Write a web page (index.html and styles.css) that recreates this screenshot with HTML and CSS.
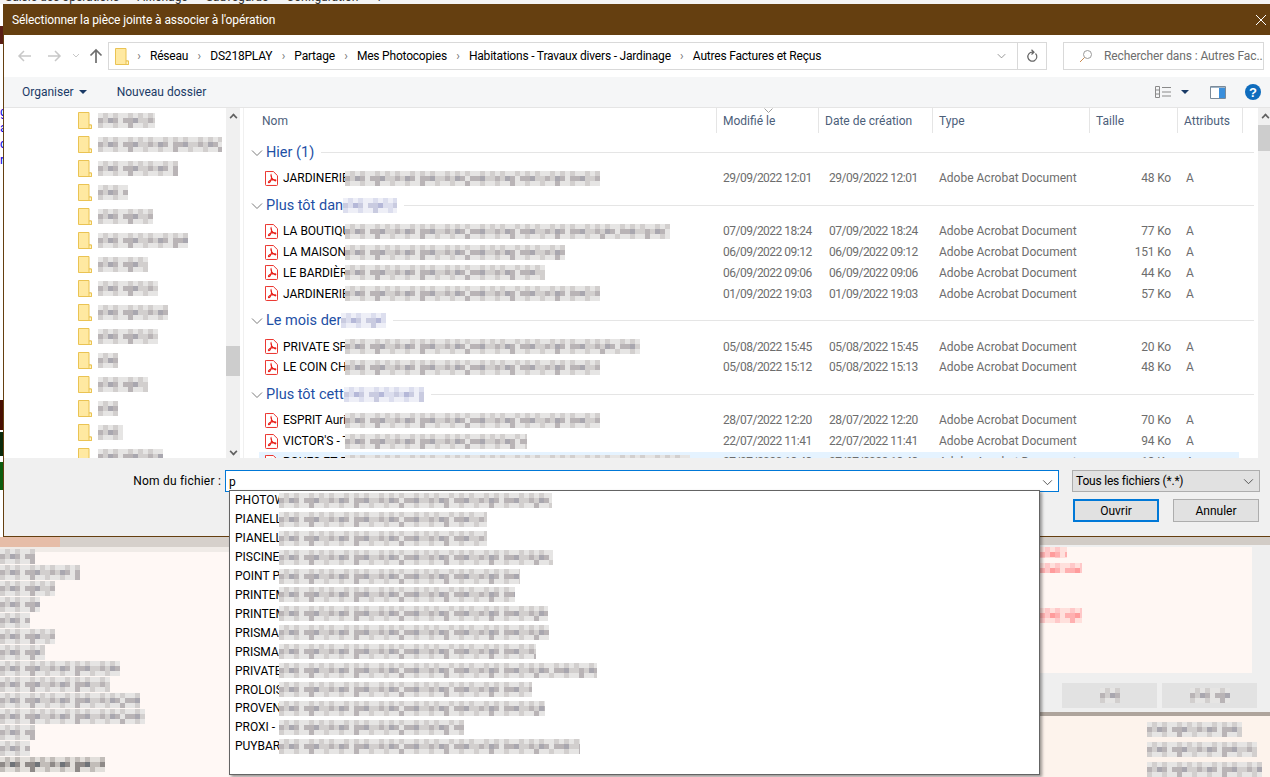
FILE: index.html
```html
<!DOCTYPE html>
<html lang="fr">
<head>
    <meta charset="UTF-8">
    <meta name="viewport" content="width=device-width, initial-scale=1.0">
    <title>Sélectionner la pièce jointe</title>
    <link rel="stylesheet" href="styles.css">
</head>
<body>
    <svg class="defs" width="0" height="0">
        <symbol id="folder" viewBox="0 0 14 17">
            <path d="M.5 .5h10.500v12.500h2.500v3.500h-13z" fill="#ffe9a1" stroke="#eac353"/>
            <path d="M11 13v3.500h2.500v-3.500z" fill="#fff3c4" stroke="#eac353"/>
        </symbol>
        <symbol id="pdf" viewBox="0 0 14 16">
            <path d="M1.500 .5h7.500l4.500 4.500v9.500a1 1 0 0 1-1 1h-11a1 1 0 0 1-1-1v-13.500a1 1 0 0 1 1-1z" fill="#fff" stroke="#e8201a"/>
            <path d="M6.500 4c-.8 1.500 1.500 5 3.800 6.300 1.400.7 2-.6.700-.9-2.300-.4-6.200.4-7.200 2-.7 1.300.8 1.500 1.700.2 1.200-1.700 2-5.200 1-7.600z" fill="none" stroke="#e8201a" stroke-width="1.100"/>
        </symbol>
        <symbol id="chev" viewBox="0 0 12 8">
            <path d="M1 1.500l5 5 5-5" fill="none" stroke="currentColor"/>
        </symbol>
    </svg>

    <div class="backdrop">
        <div class="back-menu">
            <span>Saisie des opérations</span><span>Affichage</span><span>Sauvegarde</span><span>Configuration</span><span>?</span>
        </div>
        <div class="back-edge">
            <div class="edge-title"></div>
            <div class="edge-links">g<br>a<br>c<br>r</div>
            <div class="edge-dark"></div>
            <div class="edge-black"></div>
            <div class="edge-green"></div>
        </div>
        <div class="back-lower">
            <div class="back-left">
                <div class="band"></div>
                <span class="mos" style="width:35px"></span>
                <span class="mos" style="width:80px"></span>
                <span class="mos" style="width:55px"></span>
                <span class="mos" style="width:40px"></span>
                <span class="mos" style="width:30px"></span>
                <span class="mos" style="width:55px"></span>
                <span class="mos" style="width:45px"></span>
                <span class="mos" style="width:120px"></span>
                <span class="mos" style="width:110px"></span>
                <span class="mos" style="width:140px"></span>
                <span class="mos" style="width:145px"></span>
                <span class="mos" style="width:35px"></span>
                <span class="mos" style="width:30px"></span>
                <span class="mos mos-dark" style="width:105px"></span>
            </div>
            <div class="back-right">
                <div class="back-panel">
                    <div class="back-note">
                        <span class="mos mos-red red-top" style="width:27px"></span>
                        <span class="mos mos-red red-mid" style="width:42px"></span>
                        <span class="mos mos-red red-low" style="width:42px"></span>
                    </div>
                    <div class="back-btns">
                        <div class="back-btn"><span class="mos" style="width:20px"></span></div>
                        <div class="back-btn"><span class="mos" style="width:40px"></span></div>
                    </div>
                </div>
                <div class="back-rows">
                    <span class="mos" style="width:95px"></span>
                    <span class="mos" style="width:110px"></span>
                    <span class="mos" style="width:115px"></span>
                </div>
            </div>
        </div>
    </div>

    <div class="dialog">
        <div class="titlebar">
            <span>Sélectionner la pièce jointe à associer à l'opération</span>
            <svg class="close" width="12" height="12" viewBox="0 0 12 12"><path d="M1 1l10 10M11 1l-10 10" stroke="#fff"/></svg>
        </div>

        <div class="navbar">
            <svg class="nav-ico" width="16" height="14" viewBox="0 0 16 14"><path d="M14 7h-12M7 2l-5 5 5 5" fill="none" stroke="#c8c8c8" stroke-width="1.500"/></svg>
            <svg class="nav-ico" width="16" height="14" viewBox="0 0 16 14"><path d="M2 7h12M9 2l5 5-5 5" fill="none" stroke="#c8c8c8" stroke-width="1.500"/></svg>
            <svg class="nav-drop" width="8" height="6" viewBox="0 0 8 6"><path d="M1 1l3 3 3-3" fill="none" stroke="#c8c8c8"/></svg>
            <svg class="nav-ico" width="14" height="16" viewBox="0 0 14 16"><path d="M7 15v-13M1.500 7.500l5.500-5.500 5.500 5.500" fill="none" stroke="#6e6e6e" stroke-width="1.700"/></svg>
            <div class="address">
                <svg class="addr-folder"><use href="#folder"/></svg>
                <span class="sep">›</span><span>Réseau</span>
                <span class="sep">›</span><span>DS218PLAY</span>
                <span class="sep">›</span><span>Partage</span>
                <span class="sep">›</span><span>Mes Photocopies</span>
                <span class="sep">›</span><span>Habitations - Travaux divers - Jardinage</span>
                <span class="sep">›</span><span>Autres Factures et Reçus</span>
                <div class="addr-end">
                    <svg class="addr-chev"><use href="#chev"/></svg>
                    <div class="addr-refresh">
                        <svg width="12" height="14" viewBox="0 0 12 14"><path d="M9.500 4.500a4.500 4.500 0 1 1-3-1.300h1.500M5.500 .8l2.500 2.400-2.500 2.300" fill="none" stroke="#666" stroke-width="1.200"/></svg>
                    </div>
                </div>
            </div>
            <div class="search">
                <svg width="14" height="14" viewBox="0 0 14 14"><circle cx="8.500" cy="5.500" r="4" fill="none" stroke="#9a9a9a"/><path d="M5.500 8.500l-4.500 4.500" stroke="#c98a50"/></svg>
                <span>Rechercher dans : Autres Fac...</span>
            </div>
        </div>

        <div class="toolbar">
            <span class="tool-org">Organiser <i class="caret"></i></span>
            <span class="tool-new">Nouveau dossier</span>
            <div class="tool-right">
                <svg width="17" height="14" viewBox="0 0 17 14"><path d="M.5 1.500h4v11h-4zM.5 5h4M.5 9h4M7 2.500h9M7 7h9M7 11h9" fill="none" stroke="#8a8a8a"/></svg>
                <i class="caret"></i>
                <svg class="tool-pane" width="16" height="13" viewBox="0 0 16 13"><path d="M.5 .5h15v12h-15z" fill="#fff" stroke="#7a8a99"/><path d="M9 1h6v11h-6z" fill="#3a8fdc"/><path d="M1 1h14v1h-14z" fill="#9fb4c7"/></svg>
                <svg width="16" height="16" viewBox="0 0 16 16"><circle cx="8" cy="8" r="8" fill="#0f6cbd"/><text x="8" y="12.500" text-anchor="middle" class="help-mark">?</text></svg>
            </div>
        </div>

        <div class="browser">
            <div class="tree">
                <div class="tree-list">
                    <div class="tree-item"><svg><use href="#folder"/></svg><span class="mos" style="width:57px"></span></div>
                    <div class="tree-item"><svg><use href="#folder"/></svg><span class="mos" style="width:124px"></span></div>
                    <div class="tree-item"><svg><use href="#folder"/></svg><span class="mos" style="width:80px"></span></div>
                    <div class="tree-item"><svg><use href="#folder"/></svg><span class="mos" style="width:30px"></span></div>
                    <div class="tree-item"><svg><use href="#folder"/></svg><span class="mos" style="width:55px"></span></div>
                    <div class="tree-item"><svg><use href="#folder"/></svg><span class="mos" style="width:90px"></span></div>
                    <div class="tree-item"><svg><use href="#folder"/></svg><span class="mos" style="width:50px"></span></div>
                    <div class="tree-item"><svg><use href="#folder"/></svg><span class="mos" style="width:60px"></span></div>
                    <div class="tree-item"><svg><use href="#folder"/></svg><span class="mos" style="width:70px"></span></div>
                    <div class="tree-item"><svg><use href="#folder"/></svg><span class="mos" style="width:60px"></span></div>
                    <div class="tree-item"><svg><use href="#folder"/></svg><span class="mos" style="width:20px"></span></div>
                    <div class="tree-item"><svg><use href="#folder"/></svg><span class="mos" style="width:50px"></span></div>
                    <div class="tree-item"><svg><use href="#folder"/></svg><span class="mos" style="width:20px"></span></div>
                    <div class="tree-item"><svg><use href="#folder"/></svg><span class="mos" style="width:25px"></span></div>
                    <div class="tree-item"><svg><use href="#folder"/></svg><span class="mos" style="width:65px"></span></div>
                </div>
                <div class="scroll tree-scroll">
                    <span class="arr arr-up"></span>
                    <div class="thumb"></div>
                    <span class="arr arr-down"></span>
                </div>
            </div>

            <div class="files">
                <div class="head">
                    <div class="col col-name">Nom</div>
                    <div class="col col-mod"><svg class="sort" width="9" height="5" viewBox="0 0 9 5"><path d="M.5 .5l4 4 4-4" fill="none" stroke="#a0a0a0"/></svg>Modifié le</div>
                    <div class="col col-date">Date de création</div>
                    <div class="col col-type">Type</div>
                    <div class="col col-size">Taille</div>
                    <div class="col col-attr">Attributs</div>
                </div>

                <div class="list">
                    <div class="group first"><svg class="g-chev"><use href="#chev"/></svg><span>Hier (1)</span><i></i></div>
                    <div class="row"><svg><use href="#pdf"/></svg><div class="fname">JARDINERIE<span class="mos" style="width:255px"></span></div><span>29/09/2022 12:01</span><span>29/09/2022 12:01</span><span>Adobe Acrobat Document</span><span class="size">48 Ko</span><span>A</span></div>

                    <div class="group"><svg class="g-chev"><use href="#chev"/></svg><span>Plus tôt dan</span><span class="mos mos-blue" style="width:54px"></span><i></i></div>
                    <div class="row"><svg><use href="#pdf"/></svg><div class="fname">LA BOUTIQUE<span class="mos" style="width:325px"></span></div><span>07/09/2022 18:24</span><span>07/09/2022 18:24</span><span>Adobe Acrobat Document</span><span class="size">77 Ko</span><span>A</span></div>
                    <div class="row"><svg><use href="#pdf"/></svg><div class="fname">LA MAISON<span class="mos" style="width:220px"></span></div><span>06/09/2022 09:12</span><span>06/09/2022 09:12</span><span>Adobe Acrobat Document</span><span class="size">151 Ko</span><span>A</span></div>
                    <div class="row"><svg><use href="#pdf"/></svg><div class="fname">LE BARDIÈRE<span class="mos" style="width:200px"></span></div><span>06/09/2022 09:06</span><span>06/09/2022 09:06</span><span>Adobe Acrobat Document</span><span class="size">44 Ko</span><span>A</span></div>
                    <div class="row"><svg><use href="#pdf"/></svg><div class="fname">JARDINERIE<span class="mos" style="width:255px"></span></div><span>01/09/2022 19:03</span><span>01/09/2022 19:03</span><span>Adobe Acrobat Document</span><span class="size">57 Ko</span><span>A</span></div>

                    <div class="group"><svg class="g-chev"><use href="#chev"/></svg><span>Le mois der</span><span class="mos mos-blue" style="width:45px"></span><i></i></div>
                    <div class="row"><svg><use href="#pdf"/></svg><div class="fname">PRIVATE SPO<span class="mos" style="width:295px"></span></div><span>05/08/2022 15:45</span><span>05/08/2022 15:45</span><span>Adobe Acrobat Document</span><span class="size">20 Ko</span><span>A</span></div>
                    <div class="row"><svg><use href="#pdf"/></svg><div class="fname">LE COIN CH<span class="mos" style="width:255px"></span></div><span>05/08/2022 15:12</span><span>05/08/2022 15:13</span><span>Adobe Acrobat Document</span><span class="size">48 Ko</span><span>A</span></div>

                    <div class="group"><svg class="g-chev"><use href="#chev"/></svg><span>Plus tôt cett</span><span class="mos mos-blue" style="width:80px"></span><i></i></div>
                    <div class="row"><svg><use href="#pdf"/></svg><div class="fname">ESPRIT Auril<span class="mos" style="width:255px"></span></div><span>28/07/2022 12:20</span><span>28/07/2022 12:20</span><span>Adobe Acrobat Document</span><span class="size">70 Ko</span><span>A</span></div>
                    <div class="row"><svg><use href="#pdf"/></svg><div class="fname">VICTOR'S - T<span class="mos" style="width:182px"></span></div><span>22/07/2022 11:41</span><span>22/07/2022 11:41</span><span>Adobe Acrobat Document</span><span class="size">94 Ko</span><span>A</span></div>
                    <div class="row row-sel"><svg><use href="#pdf"/></svg><div class="fname">ROUES ET R<span class="mos" style="width:345px"></span></div><span>07/07/2022 18:43</span><span>07/07/2022 18:43</span><span>Adobe Acrobat Document</span><span class="size">18 Ko</span><span>A</span></div>
                </div>

                <div class="scroll files-scroll">
                    <span class="arr arr-up"></span>
                    <div class="thumb"></div>
                </div>
            </div>
        </div>

        <div class="footer">
            <div class="foot-line">
                <label class="foot-label">Nom du fichier :</label>
                <div class="name-input"><span>p</span><svg class="field-chev"><use href="#chev"/></svg></div>
                <div class="type-select"><span>Tous les fichiers (*.*)</span><svg class="field-chev"><use href="#chev"/></svg></div>
            </div>
            <div class="foot-btns">
                <button class="btn btn-main">Ouvrir</button>
                <button class="btn">Annuler</button>
            </div>
        </div>
    </div>

    <div class="suggest">
        <div class="sug-item">PHOTOW<span class="mos" style="width:273px"></span></div>
        <div class="sug-item">PIANELL<span class="mos" style="width:208px"></span></div>
        <div class="sug-item">PIANELL<span class="mos" style="width:208px"></span></div>
        <div class="sug-item">PISCINE-<span class="mos" style="width:274px"></span></div>
        <div class="sug-item">POINT P<span class="mos" style="width:241px"></span></div>
        <div class="sug-item">PRINTEM<span class="mos" style="width:236px"></span></div>
        <div class="sug-item">PRINTEM<span class="mos" style="width:269px"></span></div>
        <div class="sug-item">PRISMAS<span class="mos" style="width:270px"></span></div>
        <div class="sug-item">PRISMAS<span class="mos" style="width:257px"></span></div>
        <div class="sug-item">PRIVATE<span class="mos" style="width:318px"></span></div>
        <div class="sug-item">PROLOIS<span class="mos" style="width:253px"></span></div>
        <div class="sug-item">PROVEN<span class="mos" style="width:266px"></span></div>
        <div class="sug-item">PROXI -<span class="mos" style="width:185px"></span></div>
        <div class="sug-item">PUYBAR<span class="mos" style="width:301px"></span></div>
    </div>
</body>
</html>
```

FILE: styles.css
```css
* {
    box-sizing: border-box;
}
html, body {
    margin: 0;
    height: 777px;
    overflow: hidden;
}
body {
    position: relative;
    width: 1270px;
    font-family: Roboto, "Liberation Sans", sans-serif;
    font-size: 12px;
    color: #000;
    background: #fff;
}
.defs {
    position: absolute;
}

/* pixelated areas of the screenshot */
.mos {
    --a: #b9b4b6;
    --b: #d2cfce;
    --c: #e6e5e4;
    --d: #a9a7af;
    display: inline-block;
    flex: none;
    height: 15px;
    background:
        linear-gradient(90deg, var(--c) 0 5px, var(--b) 5px 10px, var(--c) 10px 15px, var(--b) 15px 20px, var(--c) 20px 30px, var(--b) 30px 35px) 0 0 / 35px 5px repeat-x,
        linear-gradient(90deg, var(--a) 0 5px, var(--b) 5px 10px, var(--d) 10px 15px, var(--a) 15px 20px, var(--c) 20px 25px, var(--a) 25px 35px, var(--d) 35px 40px, var(--b) 40px 50px) 0 5px / 50px 5px repeat-x,
        linear-gradient(90deg, var(--b) 0 5px, var(--c) 5px 15px, var(--b) 15px 20px, var(--c) 20px 30px, var(--a) 30px 35px, var(--c) 35px 45px) 0 10px / 45px 5px repeat-x;
}
.mos-blue {
    --a: #c9cbe0;
    --b: #dcdeee;
    --c: #eeeff7;
    --d: #b5b8d8;
}
.mos-red {
    --a: #ffb0b0;
    --b: #ffc8c8;
    --c: #ffe0dc;
    --d: #ff9c9c;
}
.mos-dark {
    --a: #8f8a88;
    --b: #c2bdb9;
    --c: #e2dfdb;
    --d: #6f7378;
}

/* application behind the dialog */
.backdrop {
    display: grid;
    grid-template-columns: 3px 1fr;
    grid-template-rows: 4px 533px 240px;
    height: 777px;
}
.back-menu {
    grid-column: 1 / 3;
    display: flex;
    gap: 18px;
    height: 4px;
    overflow: hidden;
    line-height: 0;
    padding-left: 5px;
    background: #f4f4f4;
    color: #333;
}
.back-menu span {
    margin-top: -3px;
    white-space: nowrap;
}
.back-edge {
    display: flex;
    flex-direction: column;
    overflow: hidden;
    font-size: 12px;
    color: #0000e0;
}
.edge-title {
    height: 18px;
    margin-top: 22px;
    background: #5a1f16;
}
.edge-links {
    margin-top: 60px;
    line-height: 16px;
    height: 296px;
}
.edge-dark {
    height: 30px;
    background: #480f02;
}
.edge-black {
    height: 24px;
    margin-top: 2px;
    background: #0b2a0c;
}
.edge-green {
    height: 28px;
    margin-top: 6px;
    background: #0c5c0e;
}
.back-lower {
    grid-column: 1 / 3;
    display: flex;
    height: 240px;
    background: #fff8f5;
}
.back-left {
    position: relative;
    display: flex;
    flex-direction: column;
    align-items: flex-start;
    flex: none;
    gap: 1px;
    width: 1040px;
    padding-top: 12px;
}
.band {
    position: absolute;
    top: 0;
    left: 0;
    right: 0;
    height: 15px;
    background:
        linear-gradient(90deg, #e6bda8 0 60px, #d6d0cb 60px) 0 0 / 100% 10px no-repeat,
        #f0ebe7;
}
.back-left .mos {
    position: relative;
}
.back-right {
    display: flex;
    flex-direction: column;
    flex: 1;
    min-width: 0;
}
.back-panel {
    height: 180px;
    padding: 2px 18px 0 0;
    background: #efefef;
    border-top: 8px solid #d2ccc6;
}
.back-note {
    display: flex;
    flex-direction: column;
    align-items: flex-start;
    height: 126px;
    background: #fff7f3;
}
.red-top {
    height: 11px;
}
.red-mid {
    height: 10px;
    margin-top: 5px;
}
.red-low {
    margin-top: 35px;
}
.back-btns {
    display: flex;
    gap: 5px;
    margin: 10px 0 0 22px;
}
.back-btn {
    display: flex;
    align-items: center;
    justify-content: center;
    flex: none;
    width: 95px;
    height: 25px;
    background: #e2e2e2;
}
.back-rows {
    display: flex;
    flex-direction: column;
    align-items: flex-start;
    gap: 5px;
    flex: 1;
    padding: 6px 0 0 107px;
    border-top: 4px solid #aea49c;
    background: #fdf3ec;
}

/* dialog window */
.dialog {
    position: absolute;
    top: 4px;
    left: 3px;
    right: 0;
    height: 533px;
    display: flex;
    flex-direction: column;
    background: #fff;
    border-left: 1px solid #653f10;
    border-bottom: 1px solid #653f10;
}
.titlebar {
    display: flex;
    align-items: center;
    justify-content: space-between;
    flex: none;
    height: 31px;
    padding: 0 3px 0 8px;
    background: #653f10;
    color: #fff;
    letter-spacing: -.1px;
}
.navbar {
    display: flex;
    align-items: center;
    flex: none;
    height: 42px;
    padding: 0 6px 0 13px;
}
.nav-ico {
    flex: none;
    margin-right: 13px;
}
.nav-drop {
    flex: none;
    margin: 0 9px 0 -3px;
}
.address {
    display: flex;
    align-items: center;
    flex: none;
    width: 939px;
    height: 28px;
    margin-left: -8px;
    padding-left: 6px;
    border: 1px solid #d9d9d9;
    letter-spacing: -.2px;
    white-space: nowrap;
}
.addr-folder {
    flex: none;
    width: 14px;
    height: 17px;
    margin-right: -1px;
}
.sep {
    width: 22px;
    text-align: center;
    color: #777;
}
.addr-end {
    display: flex;
    align-items: center;
    height: 100%;
    margin-left: auto;
    color: #777;
}
.addr-chev {
    width: 9px;
    height: 6px;
    margin-right: 11px;
}
.addr-refresh {
    display: flex;
    align-items: center;
    justify-content: center;
    width: 29px;
    height: 100%;
    border-left: 1px solid #d9d9d9;
}
.search {
    display: flex;
    align-items: center;
    gap: 11px;
    flex: none;
    width: 201px;
    height: 28px;
    margin-left: 16px;
    padding-left: 15px;
    border: 1px solid #d9d9d9;
    color: #6d6d6d;
    letter-spacing: -.1px;
    white-space: nowrap;
    overflow: hidden;
}
.search svg {
    flex: none;
}
.toolbar {
    display: flex;
    align-items: center;
    flex: none;
    height: 31px;
    padding: 0 9px 0 18px;
    background: #f5f6f7;
    border-bottom: 1px solid #e5e5e5;
    color: #1a3a66;
}
.tool-org {
    display: flex;
    align-items: center;
    gap: 5px;
}
.tool-new {
    margin-left: 30px;
}
.caret {
    display: inline-block;
    border-left: 4px solid transparent;
    border-right: 4px solid transparent;
    border-top: 4px solid #1a3a66;
}
.tool-right {
    display: flex;
    align-items: center;
    gap: 9px;
    margin-left: auto;
}
.tool-pane {
    margin: 0 10px 0 12px;
}
.help-mark {
    font-family: "Liberation Sans", sans-serif;
    font-size: 13px;
    font-weight: 700;
    fill: #fff;
}
.browser {
    display: flex;
    flex: 1;
    min-height: 0;
}
.tree {
    display: flex;
    flex: none;
    width: 239px;
    border-right: 3px solid #fff;
}
.tree-list {
    width: 222px;
    padding: 0 0 0 74px;
    overflow: hidden;
}
.tree-item {
    display: flex;
    align-items: center;
    gap: 6px;
    height: 24px;
}
.tree-item svg {
    flex: none;
    width: 14px;
    height: 17px;
}
.scroll {
    position: relative;
    flex: none;
    width: 14px;
    background: #f0f0f0;
}
.arr {
    position: absolute;
    left: 4px;
    width: 7px;
    height: 7px;
    border-left: 2px solid #606060;
    border-top: 2px solid #606060;
}
.arr-up {
    top: 6px;
    transform: rotate(45deg) scale(.8);
}
.arr-down {
    bottom: 3px;
    transform: rotate(225deg) scale(.8);
}
.tree-scroll .thumb {
    position: absolute;
    top: 238px;
    left: 0;
    width: 14px;
    height: 30px;
    background: #cdcdcd;
}
.files {
    position: relative;
    flex: 1;
    min-width: 0;
    border-left: 1px solid #f0f0f0;
}
.head {
    display: flex;
    height: 33px;
    padding-left: 18px;
    color: #4c607a;
}
.col {
    position: relative;
    height: 25px;
    padding: 6px 0 0 6px;
    border-right: 1px solid #e5e5e5;
}
.col-name {
    width: 455px;
    padding-left: 0;
}
.col-mod {
    width: 102px;
}
.col-date {
    width: 114px;
}
.col-type {
    width: 157px;
}
.col-size {
    width: 88px;
}
.col-attr {
    width: 65px;
}
.sort {
    position: absolute;
    top: 0;
    left: 47px;
}
.list {
    position: absolute;
    top: 33px;
    left: 0;
    right: 12px;
    bottom: 0;
    overflow: hidden;
    padding-left: 15px;
}
.group {
    position: relative;
    display: flex;
    align-items: center;
    height: 21px;
    margin: 6px 0 5px;
    padding-left: 7px;
    font-size: 14.5px;
    color: #1e4fa5;
    white-space: nowrap;
}
.group.first {
    margin-top: 1px;
}
.g-chev {
    position: absolute;
    left: -8px;
    top: 7px;
    width: 12px;
    height: 8px;
    color: #7a7a7a;
}
.group i {
    flex: 1;
    height: 1px;
    margin: 0 4px 0 7px;
    background: #e5e5e5;
}
.row {
    display: grid;
    grid-template-columns: 24px 440px 106px 110px 130px 102px 45px;
    align-items: center;
    height: 20.850px;
    color: #6d6d6d;
    white-space: nowrap;
}
.row svg {
    width: 13px;
    height: 15px;
    margin-left: 6px;
}
.row > span:nth-of-type(-n+2) {
    letter-spacing: -.5px;
}
.size {
    text-align: right;
    letter-spacing: -.2px;
}
.row > span:last-child {
    padding-left: 15px;
}
.row-sel {
    width: 980px;
    background: #e5f3ff;
}
/* the mosaic lies over the end of the name, as in the blurred capture */
.fname {
    display: grid;
    grid-template-columns: 62px 1fr;
    align-items: center;
    color: #000;
}
.files-scroll {
    position: absolute;
    top: 0;
    right: 0;
    bottom: 0;
    width: 12px;
}
.files-scroll .thumb {
    position: absolute;
    top: 17px;
    left: 0;
    width: 12px;
    height: 26px;
    background: #cdcdcd;
}
.footer {
    flex: none;
    height: 78px;
    padding-top: 12px;
    background: #f0f0f0;
}
.foot-line {
    display: flex;
    align-items: center;
    height: 22px;
}
.foot-label {
    width: 217px;
    text-align: right;
    letter-spacing: .2px;
}
.name-input {
    display: flex;
    align-items: center;
    justify-content: space-between;
    width: 834px;
    height: 22px;
    margin-left: 4px;
    padding: 2px 5px 0 3px;
    background: #fff;
    border: 1px solid #0078d7;
    color: #000;
}
.field-chev {
    width: 11px;
    height: 7px;
    color: #444;
}
.type-select {
    display: flex;
    align-items: center;
    justify-content: space-between;
    width: 188px;
    height: 22px;
    margin-left: 13px;
    padding: 0 5px 0 3px;
    background: #e1e1e1;
    border: 1px solid #adadad;
    letter-spacing: -.2px;
}
.foot-btns {
    display: flex;
    justify-content: flex-end;
    gap: 14px;
    margin: 7px 11px 0 0;
}
.btn {
    width: 86px;
    height: 23px;
    padding: 0;
    font: inherit;
    color: #000;
    background: #e1e1e1;
    border: 1px solid #adadad;
}
.btn-main {
    border: 2px solid #0078d7;
}

/* autocomplete list over the dialog */
.suggest {
    position: absolute;
    top: 490px;
    left: 229px;
    width: 811px;
    height: 285px;
    padding: 0 0 0 5px;
    background: #fff;
    border: 1px solid #646464;
    box-shadow: 2px 2px 3px rgba(0, 0, 0, .4);
}
.sug-item {
    display: grid;
    grid-template-columns: 44px 1fr;
    align-items: center;
    height: 18.920px;
    white-space: nowrap;
}
```
